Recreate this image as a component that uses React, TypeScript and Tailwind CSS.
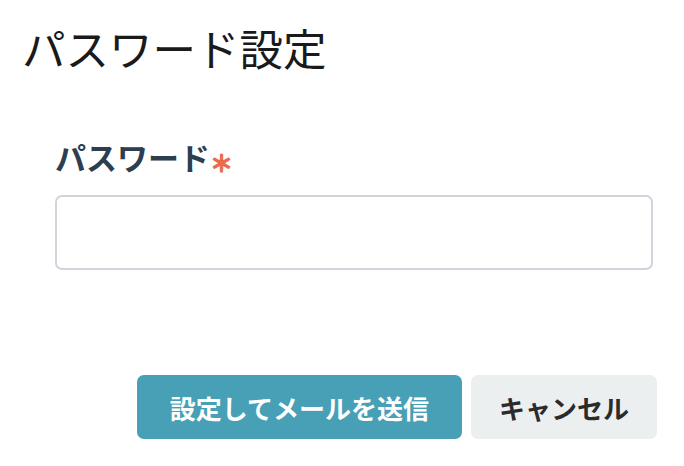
export default function App() {
  return (
    <div
      className="w-[684px] h-[466px] bg-white overflow-hidden"
      style={{ fontFamily: '"Noto Sans CJK JP", "Noto Sans", sans-serif' }}
    >
      <h1 className="pl-[22px] pt-[22px] text-[43.5px] leading-[52px] text-[#1a1a1a] font-normal">
        パスワード設定
      </h1>

      <div className="pl-[55px] pr-[31px] mt-[63px]">
        <label className="flex items-end text-[31px] leading-[40px] font-bold text-[#2c3e50]">
          パスワード
          <span className="text-[#ec6a4c] text-[23px] leading-[23px] mb-[3px] font-bold [-webkit-text-stroke:1.2px_#ec6a4c]">＊</span>
        </label>
        <input
          type="password"
          className="mt-[18px] block w-full h-[75px] rounded-[7px] border-2 border-[#d1d5db] bg-white outline-none"
        />
      </div>

      <div className="flex justify-end gap-[9px] pr-[27px] mt-[105px]">
        <button className="h-[64px] px-[33px] rounded-[7px] bg-[#47a0b5] text-white text-[26px] font-bold">
          設定してメールを送信
        </button>
        <button className="h-[64px] px-[28px] rounded-[7px] bg-[#eceff0] text-[#2b2b2b] text-[26px] font-bold">
          キャンセル
        </button>
      </div>
    </div>
  );
}
